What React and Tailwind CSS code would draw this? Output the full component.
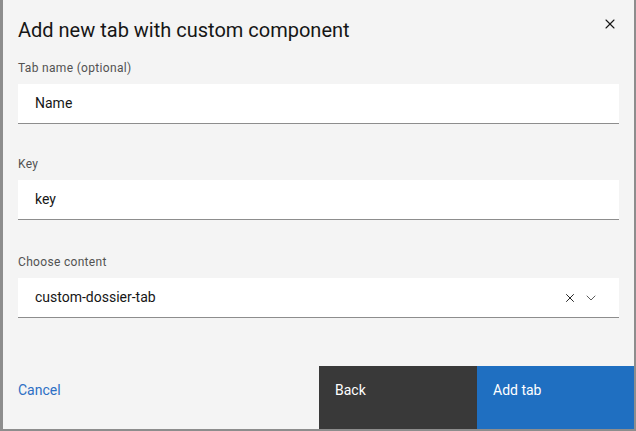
import { X, ChevronDown } from 'lucide-react';

function Field({ label, value, className, children }) {
    return (
        <div className={className}>
            <div className="text-[12px] leading-4 text-[#525252] tracking-[0.32px]">{label}</div>
            <div className="mt-2 h-10 bg-white border-b border-[#8d8d8d] flex items-center pl-[17px] pr-[20px] text-[14px] text-[#161616]">
                <span className="flex-1">{value}</span>
                {children}
            </div>
        </div>
    );
}

export default function App() {
    return (
        <div className="w-[636px] h-[431px] bg-[#8d8d8d] pl-[3px] pr-[2px] pb-[2px] font-['Roboto',sans-serif]">
            <div className="h-full bg-[#f4f4f4] flex flex-col">
                <div className="flex items-start pt-4 pl-[15px] pr-[16px]">
                    <h2 className="flex-1 text-[20px] leading-7 text-[#161616]">Add new tab with custom component</h2>
                    <button className="text-[#161616]">
                        <X size={16} strokeWidth={1.6} />
                    </button>
                </div>
                <div className="px-[15px] pt-4">
                    <Field label="Tab name (optional)" value="Name" />
                    <Field className="mt-[32px]" label="Key" value="key" />
                    <Field className="mt-[34px]" label="Choose content" value="custom-dossier-tab">
                        <X size={14} strokeWidth={1.6} className="text-[#161616]" />
                        <ChevronDown size={16} strokeWidth={1.4} className="ml-[6px] text-[#525252]" />
                    </Field>
                </div>
                <div className="mt-auto h-[63px] flex text-[14px]">
                    <button className="flex-1 text-left pl-[15px] pb-[14px] text-[#2d6fc4]">Cancel</button>
                    <button className="w-[158px] h-full bg-[#393939] text-white text-left pl-[16px] pb-[14px]">Back</button>
                    <button className="w-[157px] h-full bg-[#1f6fc1] text-white text-left pl-[16px] pb-[14px]">Add tab</button>
                </div>
            </div>
        </div>
    );
}
